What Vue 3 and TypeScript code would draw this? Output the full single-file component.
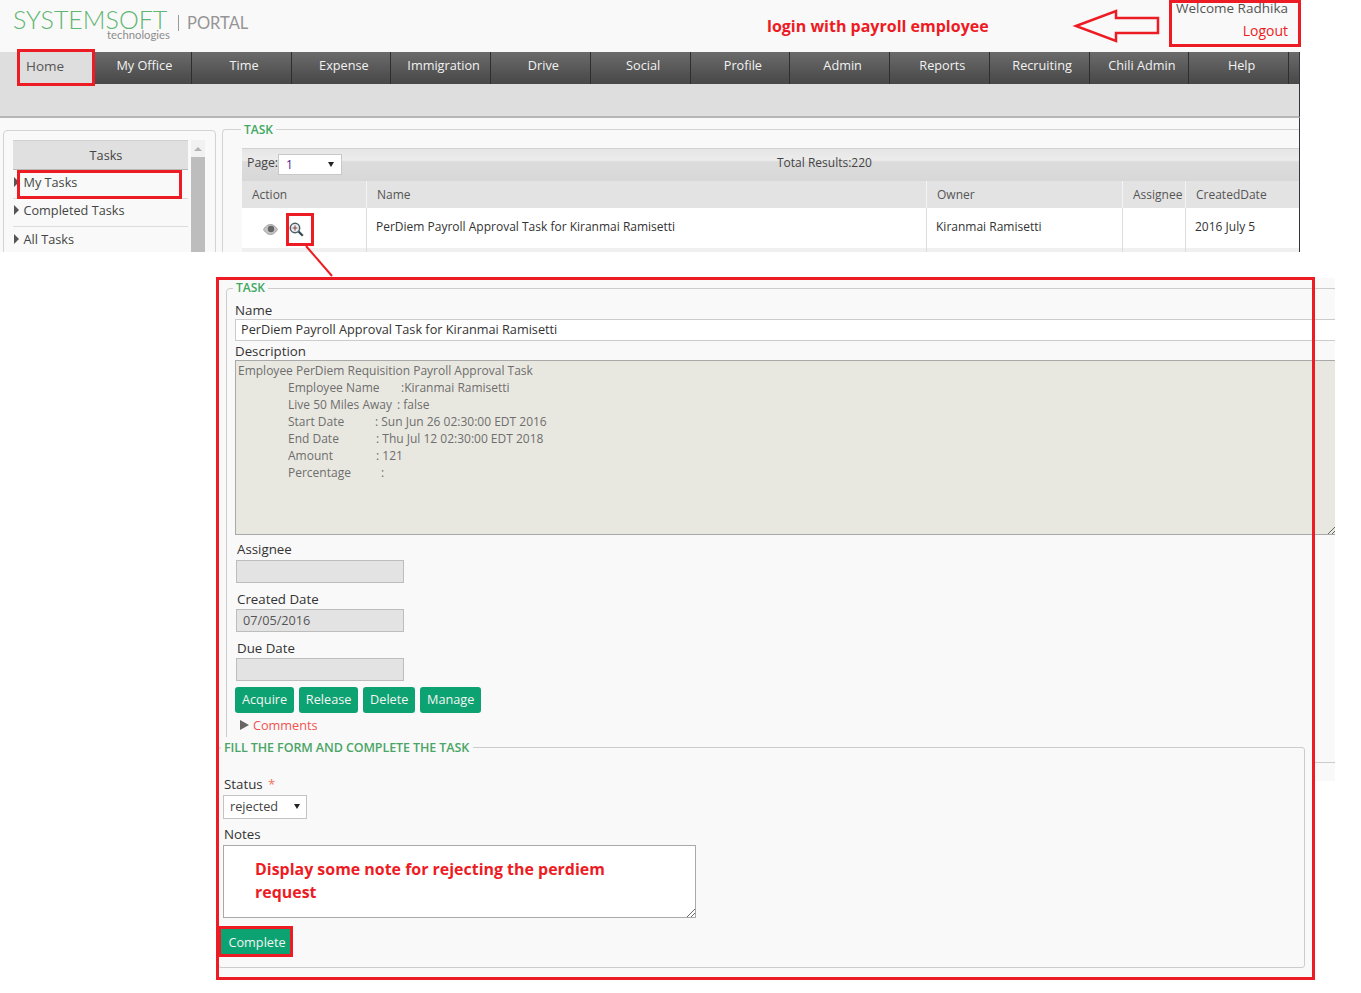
<script setup lang="ts">
interface DescRow {
  label: string;
  width: number;
  value: string;
}

const navItems: string[] = ['My Office', 'Time', 'Expense', 'Immigration', 'Drive', 'Social', 'Profile', 'Admin', 'Reports', 'Recruiting', 'Chili Admin', 'Help'];
const sideItems: string[] = ['My Tasks', 'Completed Tasks', 'All Tasks'];
const actions: string[] = ['Acquire', 'Release', 'Delete', 'Manage'];

const descRows: DescRow[] = [
  { label: 'Employee Name', width: 113, value: ':Kiranmai Ramisetti' },
  { label: 'Live 50 Miles Away', width: 109, value: ': false' },
  { label: 'Start Date', width: 87, value: ': Sun Jun 26 02:30:00 EDT 2016' },
  { label: 'End Date', width: 88, value: ': Thu Jul 12 02:30:00 EDT 2018' },
  { label: 'Amount', width: 88, value: ': 121' },
  { label: 'Percentage', width: 93, value: ':' },
];
</script>

<template>
  <div class="page">
    <section class="shot-top">
      <header class="head">
        <div class="logo">
          <span class="logo-name">SYSTEMSOFT</span>
          <span class="logo-sub">technologies</span>
        </div>
        <span class="logo-bar"></span>
        <span class="logo-portal">PORTAL</span>
        <div class="user">
          <div>Welcome Radhika</div>
          <div class="logout">Logout</div>
        </div>
      </header>

      <div class="band">
        <nav class="nav">
          <div class="nav-home">Home</div>
          <div class="nav-list">
            <div v-for="item in navItems" :key="item" class="nav-item">{{ item }}</div>
          </div>
        </nav>
      </div>

      <div class="work">
        <div class="side">
          <div class="side-inner">
            <div class="side-list">
              <div class="side-title">Tasks</div>
              <div v-for="item in sideItems" :key="item" class="side-row">
                <i class="caret"></i>{{ item }}
              </div>
            </div>
            <div class="scroll">
              <i class="scroll-up"></i>
              <div class="scroll-thumb"></div>
            </div>
          </div>
        </div>

        <div class="main">
          <span class="legend main-legend">TASK</span>
          <div class="pager">
            <span class="pager-label">Page:</span>
            <div class="pager-select"><span>1</span><i class="drop"></i></div>
            <span class="pager-total">Total Results:220</span>
          </div>
          <div class="grid grid-head">
            <div>Action</div>
            <div>Name</div>
            <div>Owner</div>
            <div>Assignee</div>
            <div>CreatedDate</div>
          </div>
          <div class="grid grid-row">
            <div class="row-actions">
              <svg width="15" height="11" viewBox="0 0 15 11">
                <path d="M0.5 5.5C3 1.5 5.5 0.5 7.5 0.5S12 1.5 14.5 5.5C12 9.5 9.5 10.5 7.5 10.5S3 9.5 0.5 5.5Z" fill="#c4c4c4" stroke="#8f8f8f" stroke-width="0.8" />
                <circle cx="8" cy="5" r="3.2" fill="#666" />
              </svg>
              <svg width="15" height="15" viewBox="0 0 15 15">
                <circle cx="6" cy="6" r="4.7" fill="#e8eef0" stroke="#4f5f66" stroke-width="1.5" />
                <path d="M6 3.6V8.4M3.6 6H8.4" stroke="#8a4a4a" stroke-width="1.1" />
                <path d="M9.6 9.6L13.8 13.8" stroke="#3b4a52" stroke-width="2.2" />
              </svg>
            </div>
            <div>PerDiem Payroll Approval Task for Kiranmai Ramisetti</div>
            <div>Kiranmai Ramisetti</div>
            <div></div>
            <div>2016 July 5</div>
          </div>
          <div class="grid grid-next">
            <div></div><div></div><div></div><div></div><div></div>
          </div>
        </div>
      </div>
    </section>

    <section class="shot-task">
      <div class="task-frame">
        <span class="legend task-legend">TASK</span>
        <div class="label">Name</div>
        <div class="name-input">PerDiem Payroll Approval Task for Kiranmai Ramisetti</div>
        <div class="label desc-label">Description</div>
        <div class="desc">
          <div>Employee PerDiem Requisition Payroll Approval Task</div>
          <div v-for="row in descRows" :key="row.label" class="desc-row">
            <span class="desc-key" :style="{ width: row.width + 'px' }">{{ row.label }}</span>{{ row.value }}
          </div>
          <svg class="grip" width="7" height="7" viewBox="0 0 7 7">
            <path d="M0 7L7 0M4 7L7 4" stroke="#666" stroke-width="1" />
          </svg>
        </div>
        <div class="stack">
          <div class="label">Assignee</div>
          <div class="ro-input"></div>
          <div class="label">Created Date</div>
          <div class="ro-input">07/05/2016</div>
          <div class="label">Due Date</div>
          <div class="ro-input"></div>
        </div>
        <div class="actions">
          <button v-for="action in actions" :key="action" class="btn" type="button">{{ action }}</button>
        </div>
        <div class="comments"><i class="comments-caret"></i>Comments</div>
      </div>
    </section>

    <section class="shot-form">
      <div class="form-frame">
        <span class="legend form-legend">FILL THE FORM AND COMPLETE THE TASK</span>
        <div class="label form-label">Status <span class="star">*</span></div>
        <div class="status-select"><span>rejected</span><i class="drop"></i></div>
        <div class="label form-label notes-label">Notes</div>
        <div class="notes">
          Display some note for rejecting the perdiem request
          <svg class="grip" width="8" height="8" viewBox="0 0 8 8">
            <path d="M0 8L8 0M4 8L8 4" stroke="#666" stroke-width="1" />
          </svg>
        </div>
        <button class="btn complete" type="button">Complete</button>
      </div>
    </section>

    <div class="note-login">login with payroll employee</div>
    <div class="mark mark-home"></div>
    <div class="mark mark-user"></div>
    <div class="mark mark-mytasks"></div>
    <div class="mark mark-zoom"></div>
    <div class="mark mark-task"></div>
    <div class="mark mark-complete"></div>
    <svg class="overlay" width="1361" height="993" viewBox="0 0 1361 993">
      <path d="M1076 26L1116 11V18H1158V33H1116V41Z" fill="none" stroke="#ed1c24" stroke-width="2.5" />
      <path d="M306 246L332 276" stroke="#ed1c24" stroke-width="2" />
    </svg>
  </div>
</template>

<style scoped>
.page {
  position: relative;
  width: 1361px;
  height: 993px;
  overflow: hidden;
  background: #fff;
  font-family: "Open Sans", "Noto Sans", sans-serif;
  font-size: 12.7px;
  color: #444;
}

/* top crop */
.shot-top {
  width: 1300px;
  height: 252px;
  overflow: hidden;
  background: #f9f9f9;
}
.head {
  position: relative;
  display: flex;
  align-items: flex-start;
  height: 52px;
  padding-left: 13px;
}
.logo {
  position: relative;
  width: 165px;
  height: 44px;
}
.logo-name {
  display: block;
  padding-top: 9px;
  font-family: Lato, sans-serif;
  font-weight: 300;
  font-size: 25px;
  line-height: 21px;
  color: #5fb672;
}
.logo-sub {
  position: absolute;
  left: 94px;
  top: 29px;
  font-family: Lato, sans-serif;
  font-size: 11.3px;
  line-height: 11px;
  color: #8d8d8d;
}
.logo-bar {
  width: 1px;
  height: 16px;
  margin-top: 15px;
  background: #9a9a9a;
}
.logo-portal {
  margin: 13px 0 0 8px;
  font-family: Lato, sans-serif;
  font-size: 16.5px;
  line-height: 20px;
  color: #959595;
}
.user {
  position: absolute;
  right: 12px;
  top: 0;
  text-align: right;
  font-size: 13.5px;
  line-height: 16px;
  color: #555;
  white-space: nowrap;
}
.logout {
  margin-top: 7px;
  color: #ed1c24;
  font-size: 14px;
}
.band {
  height: 66px;
  background: #dedede;
  border-bottom: 2px solid #b5b5b5;
  border-right: 1px solid #334;
  box-sizing: border-box;
}
.nav {
  display: flex;
  height: 32px;
  padding-left: 18px;
}
.nav-home {
  width: 74px;
  box-sizing: border-box;
  padding-left: 8px;
  line-height: 28px;
  font-size: 13.5px;
  color: #555;
}
.nav-list {
  display: flex;
  flex: 1;
  background: linear-gradient(#6b6b6b, #474747);
}
.nav-item {
  width: 99.75px;
  padding-left: 6px;
  border-right: 1px solid #2e2e2e;
  box-sizing: border-box;
  text-align: center;
  line-height: 27px;
  color: #f2f2f2;
  white-space: nowrap;
}
.work {
  display: flex;
  gap: 6px;
  height: 134px;
  padding: 12px 0 0 3px;
  border-right: 1px solid #334;
  box-sizing: border-box;
}
.side {
  width: 213px;
  height: 140px;
  padding: 9px 9px;
  border: 1px solid #d3d3d3;
  border-radius: 4px;
  box-sizing: border-box;
}
.side-inner {
  display: flex;
  gap: 2px;
}
.side-list {
  width: 175px;
}
.side-title {
  height: 30px;
  padding-left: 11px;
  line-height: 28px;
  text-align: center;
  background: #e0e0e0;
  border-top: 1px solid #d0d0d0;
  border-bottom: 1px solid #b8b8b8;
  box-sizing: border-box;
}
.side-row {
  display: flex;
  align-items: center;
  height: 28.5px;
  padding: 0 0 4px 1px;
  border-bottom: 1px solid #ddd;
  box-sizing: border-box;
  white-space: nowrap;
}
.caret {
  width: 0;
  height: 0;
  margin-right: 4.5px;
  border-left: 5px solid #555;
  border-top: 5px solid transparent;
  border-bottom: 5px solid transparent;
}
.scroll {
  position: relative;
  width: 14px;
  height: 120px;
  margin-left: 1px;
  padding-top: 17px;
  background: #f1f1f1;
  box-sizing: border-box;
}
.scroll-up {
  position: absolute;
  left: 3px;
  top: 7px;
  border-left: 4px solid transparent;
  border-right: 4px solid transparent;
  border-bottom: 4px solid #b4b4b4;
}
.scroll-thumb {
  height: 100%;
  background: #bdbdbd;
}
.main {
  position: relative;
  flex: 1;
  height: 140px;
  margin-top: -1px;
  padding: 18px 0 0 19px;
  border: 1px solid #d3d3d3;
  border-right: 0;
  border-radius: 4px 0 0 0;
  box-sizing: border-box;
}
.legend {
  position: absolute;
  padding: 0 3px;
  background: #f9f9f9;
  color: #3fa862;
  font-size: 12px;
  font-weight: 600;
  line-height: 14px;
  white-space: nowrap;
}
.main-legend {
  left: 18px;
  top: -7px;
}
.pager {
  position: relative;
  display: flex;
  align-items: center;
  height: 33px;
  padding: 0 0 5px 5px;
  background: linear-gradient(#e6e6e6 0, #ececec 35%, #dcdcdc 40%, #d8d8d8 100%);
  border-top: 1px solid #d2d2d2;
  box-sizing: border-box;
}
.pager-label {
  font-size: 12.3px;
}
.pager-select {
  display: flex;
  align-items: center;
  justify-content: space-between;
  width: 64px;
  height: 21px;
  margin-top: 3px;
  padding: 0 7px;
  background: #fff;
  border: 1px solid #c8c8c8;
  box-sizing: border-box;
  color: #551a8b;
  font-size: 12px;
}
.drop {
  border-left: 3px solid transparent;
  border-right: 3px solid transparent;
  border-top: 5px solid #222;
}
.pager-total {
  position: absolute;
  left: 535px;
  top: 5px;
  font-size: 12px;
}
.grid {
  display: grid;
  grid-template-columns: 125px 560px 196px 63px 1fr;
}
.grid > div {
  padding-left: 10px;
  border-right: 1px solid #ddd;
  box-sizing: border-box;
  white-space: nowrap;
  overflow: hidden;
}
.grid > div:last-child {
  border-right: 0;
}
.grid-head {
  height: 27px;
  line-height: 28px;
  background: #e3e3e3;
  font-size: 12px;
  color: #555;
}
.grid-head > div {
  border-right-color: #f4f4f4;
}
.grid-row {
  height: 40px;
  line-height: 38px;
  background: #fff;
  color: #333;
  font-size: 12px;
}
.grid-row > div {
  padding-left: 9px;
}
.grid-next {
  height: 8px;
  background: #f0f0f0;
}
.grid-row > .row-actions {
  display: flex;
  align-items: center;
  gap: 11px;
  padding: 2px 0 0 21px;
}

/* task crop */
.shot-task {
  width: 1117px;
  height: 503px;
  margin: 26px 0 0 218px;
  overflow: hidden;
  background: #f9f9f9;
}
.task-frame {
  position: relative;
  width: 1200px;
  height: 460px;
  margin: 10px 0 0 8px;
  padding: 13px 0 0 8px;
  border: 1px solid #ccc;
  border-radius: 4px 0 0 0;
  color: #333;
}
.task-legend {
  left: 6px;
  top: -8px;
}
.label {
  font-size: 13.3px;
  line-height: 16px;
  color: #333;
}
.name-input {
  height: 22px;
  margin-top: 1px;
  padding-left: 5px;
  line-height: 19px;
  background: #fff;
  border: 1px solid #ccc;
  box-sizing: border-box;
}
.desc-label {
  margin-top: 2px;
}
.desc {
  position: relative;
  width: 1100px;
  height: 175px;
  margin-top: 1px;
  padding: 1px 2px;
  background: #e9e8e0;
  border: 1px solid #a9a9a9;
  border-right: 0;
  box-sizing: border-box;
  font-size: 12px;
  line-height: 17px;
  color: #6e6e6e;
}
.desc-row {
  padding-left: 50px;
  white-space: nowrap;
}
.desc-key {
  display: inline-block;
}
.desc .grip {
  position: absolute;
  right: 0;
  bottom: 0;
}
.stack {
  padding-left: 1px;
}
.stack .label {
  margin-top: 6px;
  padding-left: 1px;
  line-height: 20px;
}
.stack .label:first-child {
  margin-top: 4px;
}
.ro-input {
  width: 168px;
  height: 23px;
  padding-left: 6px;
  line-height: 20px;
  background: #e3e3e3;
  border: 1px solid #bdbdbd;
  box-sizing: border-box;
  color: #555;
}
.stack .ro-input:nth-child(2) {
  margin-top: 1px;
}
.actions {
  display: flex;
  gap: 4.7px;
  margin-top: 6px;
}
.btn {
  height: 26px;
  padding: 0 7px 2px;
  background: #0da271;
  border: 0;
  border-radius: 3px;
  color: #f4f4f4;
  font-family: inherit;
  font-size: 12.7px;
}
.comments {
  display: flex;
  align-items: center;
  height: 16px;
  margin: 4px 0 0 5px;
  color: #f0524f;
}
.comments-caret {
  width: 0;
  height: 0;
  margin-right: 4px;
  border-left: 9px solid #666;
  border-top: 5px solid transparent;
  border-bottom: 5px solid transparent;
}

/* form crop */
.shot-form {
  position: relative;
  width: 1095px;
  height: 241px;
  margin: -44px 0 0 218px;
  padding-top: 10px;
  background: #f9f9f9;
  box-sizing: border-box;
}
.form-frame {
  position: relative;
  width: 1087px;
  height: 221px;
  padding: 28px 0 0 4px;
  border: 1px solid #ccc;
  border-radius: 3px;
  box-sizing: border-box;
}
.form-legend {
  left: 2px;
  top: -7px;
  padding: 0 4px 0 3px;
  font-size: 12.5px;
  letter-spacing: -0.1px;
  color: #4aa566;
}
.form-label {
  padding-left: 1px;
}
.star {
  margin-left: 2px;
  color: #f0735f;
}
.status-select {
  display: flex;
  align-items: center;
  justify-content: space-between;
  width: 84px;
  height: 24px;
  margin-top: 3px;
  padding: 0 6px 2px;
  background: #fff;
  border: 1px solid #c4c4c4;
  box-sizing: border-box;
}
.notes-label {
  margin-top: 7px;
}
.notes {
  position: relative;
  width: 473px;
  height: 73px;
  margin-top: 3px;
  padding: 12px 60px 0 31px;
  background: #fff;
  border: 1px solid #a9a9a9;
  box-sizing: border-box;
  color: #ed1c24;
  font-size: 15.95px;
  font-weight: 700;
  line-height: 23px;
}
.notes .grip {
  position: absolute;
  right: 0;
  bottom: 0;
}
.complete {
  display: block;
  height: 26px;
  margin: 11px 0 0 -2px;
  padding: 0 5.5px 0 7.5px;
  border-radius: 0;
}

/* annotations pasted over the screenshot */
.note-login {
  position: absolute;
  left: 767px;
  top: 15px;
  color: #ed1c24;
  font-size: 16px;
  font-weight: 700;
  line-height: 22px;
  white-space: nowrap;
}
.mark {
  position: absolute;
  border: 3px solid #ed1c24;
  box-sizing: border-box;
}
.mark-home {
  left: 17px;
  top: 49px;
  width: 78px;
  height: 37px;
}
.mark-user {
  left: 1169px;
  top: 0;
  width: 132px;
  height: 47px;
}
.mark-mytasks {
  left: 17px;
  top: 170px;
  width: 165px;
  height: 29px;
}
.mark-zoom {
  left: 286px;
  top: 213px;
  width: 28px;
  height: 33px;
}
.mark-task {
  left: 216px;
  top: 277px;
  width: 1099px;
  height: 703px;
}
.mark-complete {
  left: 218px;
  top: 926px;
  width: 75px;
  height: 31px;
}
.overlay {
  position: absolute;
  left: 0;
  top: 0;
  pointer-events: none;
}
</style>
